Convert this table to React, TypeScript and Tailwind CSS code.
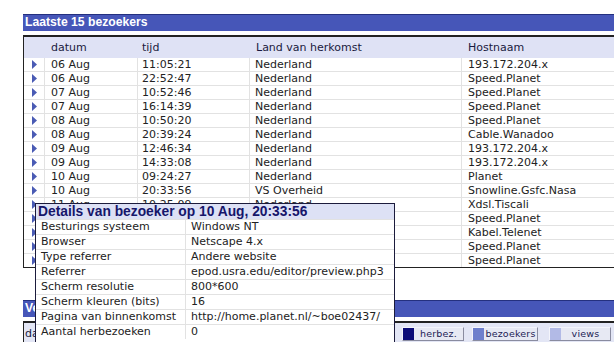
import React from "react";

const rows: [string, string, string, string][] = [
  ["06 Aug", "11:05:21", "Nederland", "193.172.204.x"],
  ["06 Aug", "22:52:47", "Nederland", "Speed.Planet"],
  ["07 Aug", "10:52:46", "Nederland", "Speed.Planet"],
  ["07 Aug", "16:14:39", "Nederland", "Speed.Planet"],
  ["08 Aug", "10:50:20", "Nederland", "Speed.Planet"],
  ["08 Aug", "20:39:24", "Nederland", "Cable.Wanadoo"],
  ["09 Aug", "12:46:34", "Nederland", "193.172.204.x"],
  ["09 Aug", "14:33:08", "Nederland", "193.172.204.x"],
  ["10 Aug", "09:24:27", "Nederland", "Planet"],
  ["10 Aug", "20:33:56", "VS Overheid", "Snowline.Gsfc.Nasa"],
  ["11 Aug", "10:25:09", "Nederland", "Xdsl.Tiscali"],
  ["11 Aug", "14:12:51", "Nederland", "Speed.Planet"],
  ["11 Aug", "19:40:02", "België", "Kabel.Telenet"],
  ["12 Aug", "08:31:17", "Nederland", "Speed.Planet"],
  ["12 Aug", "11:02:45", "Nederland", "Speed.Planet"],
];

const details: [string, string][] = [
  ["Besturings systeem", "Windows NT"],
  ["Browser", "Netscape 4.x"],
  ["Type referrer", "Andere website"],
  ["Referrer", "epod.usra.edu/editor/preview.php3"],
  ["Scherm resolutie", "800*600"],
  ["Scherm kleuren (bits)", "16"],
  ["Pagina van binnenkomst", "http://home.planet.nl/~boe02437/"],
  ["Aantal herbezoeken", "0"],
];

function Arrow() {
  return (
    <svg width="5" height="9" viewBox="0 0 5 9">
      <path d="M0 0 L5 4.5 L0 9 Z" fill="#4a5bb4" />
    </svg>
  );
}

function LegendButton({ color, label, w }: { color: string; label: string; w: string }) {
  return (
    <div className={`flex h-[14px] ${w} border border-t-[#f4f5fb] border-l-[#f4f5fb] border-b-[#8a8ca0] border-r-[#8a8ca0] bg-[#e7e9f3]`}>
      <div className="w-[11px] h-full" style={{ backgroundColor: color }} />
      <div className="flex-1 flex items-center justify-center text-[9.5px] leading-[12px] tracking-[0.2px] text-[#1c1c55]">
        {label}
      </div>
    </div>
  );
}

export default function App() {
  return (
    <div className="relative w-[614px] h-[342px] overflow-hidden bg-white font-[family-name:'DejaVu_Sans',sans-serif] text-[#222]">
      <div className="flex flex-col pl-[23px] pt-[14px] w-[623px]">
        {/* title bar */}
        <div className="h-[17px] bg-[#4656b8] border-t border-[#24307f] text-white font-bold font-[family-name:'Liberation_Sans',Arial,sans-serif] text-[12.2px] leading-[15px] pl-[2px]">
          Laatste 15 bezoekers
        </div>
        {/* table */}
        <div className="mt-[4px] border-t-2 border-l border-b border-[#222]">
          <div className="flex h-[21px] bg-[#dfe2f5] items-center text-[11px] leading-[13px] text-[#1a1a40]">
            <div className="w-[21px]" />
            <div className="w-[93px] pl-[6px]">datum</div>
            <div className="w-[112px] pl-[4px]">tijd</div>
            <div className="w-[212px] pl-[6px]">Land van herkomst</div>
            <div className="flex-1 pl-[6px]">Hostnaam</div>
          </div>
          {rows.map((r, i) => (
            <div
              key={i}
              className={`flex text-[11px] leading-[13px] ${i < rows.length - 1 ? "h-[14px] border-b border-[#e2e2e2]" : "h-[13px]"}`}
            >
              <div className="w-[21px] border-r border-[#e2e2e2] flex items-center justify-center pl-[1px]">
                <Arrow />
              </div>
              <div className="w-[93px] border-r border-[#e2e2e2] pl-[6px] whitespace-nowrap">{r[0]}</div>
              <div className="w-[112px] border-r border-[#e2e2e2] pl-[4px] whitespace-nowrap">{r[1]}</div>
              <div className="w-[212px] border-r border-[#e2e2e2] pl-[5px] whitespace-nowrap">{r[2]}</div>
              <div className="flex-1 pl-[6px] whitespace-nowrap">{r[3]}</div>
            </div>
          ))}
        </div>

        {/* second section */}
        <div className="mt-[32px] h-[17px] bg-[#4656b8] border-t border-[#24307f] text-white font-bold font-[family-name:'Liberation_Sans',Arial,sans-serif] text-[12.2px] leading-[15px] pl-[2px]">
          Verloop van bezoekers
        </div>
        <div className="mt-[4px] border-t-2 border-l border-[#222] bg-[#e3e6f5] h-[30px] flex items-start pt-[3px]">
          <div className="text-[11px] leading-[13px] pl-[1px] pt-[1px] text-[#1a1a40]">datum</div>
          <div className="ml-auto flex pr-[12px] pt-[1px]">
            <LegendButton color="#0c0c78" label="herbez." w="w-[62px]" />
            <div className="ml-[8px]">
              <LegendButton color="#6e7fcc" label="bezoekers" w="w-[66px]" />
            </div>
            <div className="ml-[11px]">
              <LegendButton color="#b2bae6" label="views" w="w-[62px]" />
            </div>
          </div>
        </div>
      </div>

      {/* tooltip */}
      <div className="absolute left-[35px] top-[203px] w-[360px] border border-[#1b1b3c] bg-white pb-[10px]">
        <div className="h-[15px] bg-[#dde1f5] text-[#16166a] font-bold font-[family-name:'Liberation_Sans',Arial,sans-serif] text-[13.8px] leading-[15px] pl-[2px] whitespace-nowrap">
          Details van bezoeker op 10 Aug, 20:33:56
        </div>
        {details.map((d, i) => (
          <div key={i} className="flex h-[15px] border-t border-[#e2e2e2] text-[11px] leading-[14px] text-[#222]">
            <div className="w-[150px] border-r border-[#e2e2e2] pl-[5px] whitespace-nowrap">{d[0]}</div>
            <div className="flex-1 pl-[5px] whitespace-nowrap">{d[1]}</div>
          </div>
        ))}
      </div>
    </div>
  );
}
